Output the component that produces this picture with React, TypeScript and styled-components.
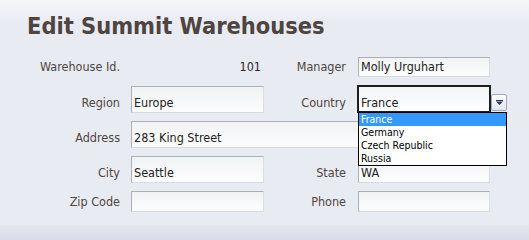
import React from "react";
import styled, { createGlobalStyle } from "styled-components";

const GlobalStyle = createGlobalStyle`
  html, body {
    margin: 0;
    background: #e9ebf3;
  }
  body {
    font-family: "DejaVu Sans Condensed", "DejaVu Sans", sans-serif;
    font-size: 12.5px;
  }
`;

const Page = styled.div`
  min-height: 100vh;
  display: flex;
  flex-direction: column;
  background: linear-gradient(#f5f6f9 0, #e9ebf3 24px, #e9ebf3 100%);
`;

const Title = styled.h1`
  margin: 0;
  padding: 12px 0 0 27px;
  font-size: 23.4px;
  line-height: 28px;
  font-weight: bold;
  color: #4e4440;
`;

const Form = styled.div`
  display: grid;
  grid-template-columns: 131px 133px 94px 132px 17px;
  grid-template-rows: 21px 28px 27px 27px 21px;
  row-gap: 8px;
  align-items: end;
  margin-top: 16px;
`;

const Label = styled.label<{ $pr?: number }>`
  text-align: right;
  white-space: nowrap;
  line-height: 15px;
  padding: 0 ${(p) => p.$pr ?? 11}px 3px 0;
  color: #4f4541;
`;

const ValueText = styled.span`
  text-align: right;
  line-height: 15px;
  padding: 0 3px 3px 0;
  color: #2a2a2a;
`;

const Field = styled.input<{ $h: number; $span?: string }>`
  box-sizing: border-box;
  height: ${(p) => p.$h}px;
  width: 100%;
  margin: 0;
  grid-column: ${(p) => p.$span ?? "auto"};
  padding: ${(p) => p.$h - 19}px 2px 2px 2px;
  font: inherit;
  line-height: 15px;
  color: #222;
  border: 1px solid;
  border-color: #aab0ba #dadde4 #d6dae2 #aab0ba;
  border-radius: 0;
  background: linear-gradient(#f1f2f4, #fdfdfe);
  outline: none;
`;

const Select = styled.div`
  position: relative;
  box-sizing: border-box;
  height: 28px;
  margin: 0 -1px;
  padding: 0 2px 1px 2px;
  display: flex;
  align-items: flex-end;
  border: 2px solid #1e1e1e;
  background: linear-gradient(#f3f4f6, #fdfdfe);
  line-height: 15px;
  color: #222;
`;

const ArrowButton = styled.button`
  box-sizing: border-box;
  width: 16px;
  height: 17px;
  margin: 0 0 2px 1px;
  padding: 0;
  display: flex;
  align-items: center;
  justify-content: center;
  border: 1px solid #9ea9c4;
  border-radius: 2px;
  background: linear-gradient(#fdfdfe, #e1e6ef);
`;

const OptionList = styled.ul`
  position: absolute;
  z-index: 2;
  left: -1px;
  top: 25px;
  box-sizing: border-box;
  width: 149px;
  margin: 0;
  padding: 0;
  list-style: none;
  border: 1px solid #000;
  background: #fff;
`;

const Option = styled.li<{ $selected?: boolean }>`
  height: 13px;
  padding-left: 2px;
  font-size: 10.5px;
  line-height: 13px;
  white-space: nowrap;
  color: ${(p) => (p.$selected ? "#fff" : "#000")};
  background: ${(p) => (p.$selected ? "#3399ff" : "transparent")};
`;

const Spacer = styled.div`
  flex: 1;
`;

const Footer = styled.div`
  height: 15px;
  background: linear-gradient(#e4e7ef, #d9dce6);
`;

const countries = ["France", "Germany", "Czech Republic", "Russia"];

export default function App() {
  return (
    <Page>
      <GlobalStyle />
      <Title>Edit Summit Warehouses</Title>
      <Form>
        <Label>Warehouse Id.</Label>
        <ValueText>101</ValueText>
        <Label $pr={12}>Manager</Label>
        <Field $h={20} value="Molly Urguhart" readOnly />
        <span />

        <Label>Region</Label>
        <Field $h={27} value="Europe" readOnly />
        <Label $pr={12}>Country</Label>
        <Select>
          France
          <OptionList>
            {countries.map((c) => (
              <Option key={c} $selected={c === "France"}>
                {c}
              </Option>
            ))}
          </OptionList>
        </Select>
        <ArrowButton type="button" aria-label="Open">
          <svg width="7" height="5" viewBox="0 0 7 5">
            <path d="M0 0h7v1H0z M0 1.5h7L3.5 5z" fill="#2a3a5e" />
          </svg>
        </ArrowButton>

        <Label>Address</Label>
        <Field $h={27} $span="2 / 5" value="283 King Street" readOnly />
        <span />

        <Label>City</Label>
        <Field $h={27} value="Seattle" readOnly />
        <Label $pr={12}>State</Label>
        <Field $h={27} value="WA" readOnly />
        <span />

        <Label>Zip Code</Label>
        <Field $h={21} value="" readOnly />
        <Label $pr={12}>Phone</Label>
        <Field $h={21} value="" readOnly />
        <span />
      </Form>
      <Spacer />
      <Footer />
    </Page>
  );
}
